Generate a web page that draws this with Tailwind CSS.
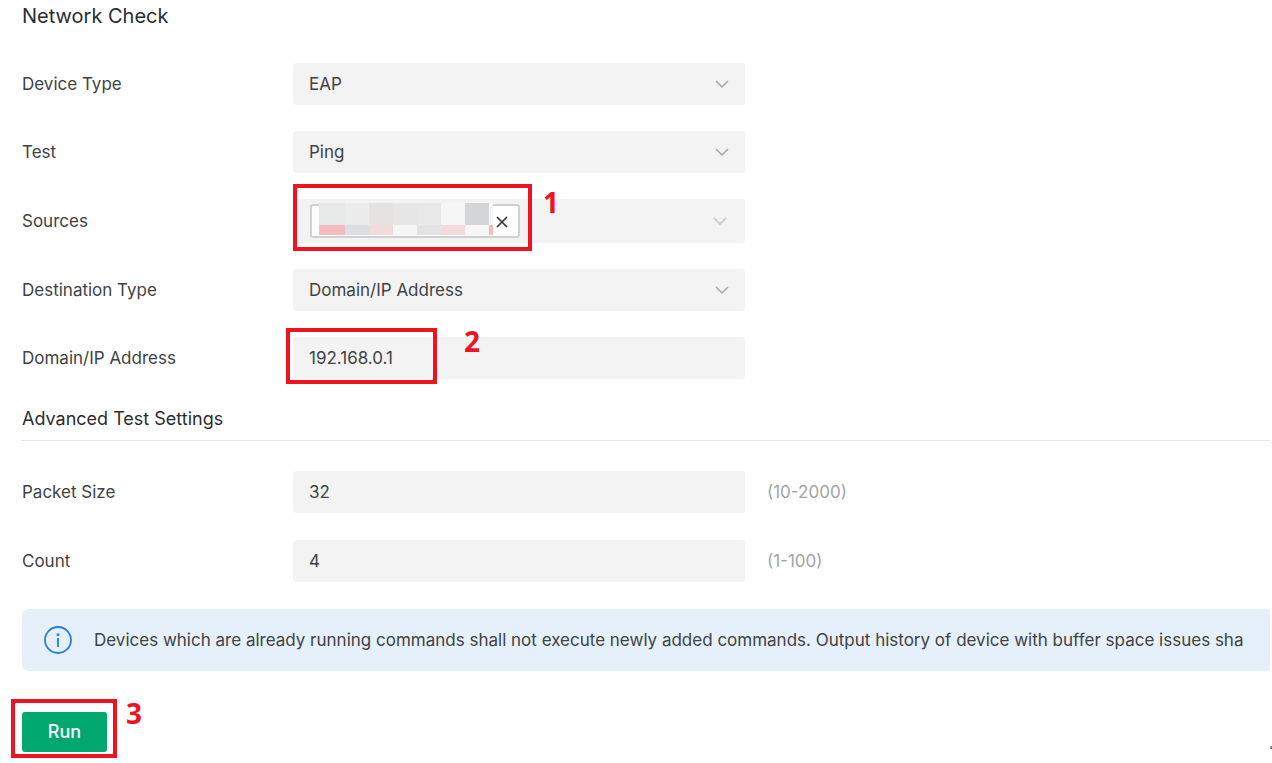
<!DOCTYPE html>
<html lang="en">

<head>
    <meta charset="UTF-8" />
    <meta name="viewport" content="width=device-width, initial-scale=1.0" />
    <title>Network Check</title>
    <script src="https://cdn.jsdelivr.net/npm/@tailwindcss/browser@4"></script>
</head>

<body class="bg-white font-['Inter',sans-serif] text-[17px] leading-6 text-[#404245] overflow-x-hidden">

    <main class="relative pl-[22px] pr-[2px] pt-1 pb-2">
        <h1 class="text-[20px] leading-6 text-[#2b2d30]">Network Check</h1>

        <form onsubmit="return false">
            <div class="flex flex-col gap-[26px] mt-[35px]">
                <div class="flex items-center">
                    <label for="device" class="w-[271px] shrink-0">Device Type</label>
                    <div class="relative w-[452px]">
                        <select id="device" class="appearance-none block w-full h-[42px] px-4 rounded bg-[#f3f3f3]">
                            <option>EAP</option>
                        </select>
                        <svg class="absolute right-4 top-4 w-[14px] h-[10px] pointer-events-none" viewBox="0 0 14 10" fill="none" stroke="#a5a6a8" stroke-width="1.5"><path d="M1 2l6 6 6-6" /></svg>
                    </div>
                </div>

                <div class="flex items-center">
                    <label for="test" class="w-[271px] shrink-0">Test</label>
                    <div class="relative w-[452px]">
                        <select id="test" class="appearance-none block w-full h-[42px] px-4 rounded bg-[#f3f3f3]">
                            <option>Ping</option>
                        </select>
                        <svg class="absolute right-4 top-4 w-[14px] h-[10px] pointer-events-none" viewBox="0 0 14 10" fill="none" stroke="#a5a6a8" stroke-width="1.5"><path d="M1 2l6 6 6-6" /></svg>
                    </div>
                </div>

                <div class="flex items-center">
                    <label for="sources" class="w-[271px] shrink-0">Sources</label>
                    <div class="relative w-[452px]">
                        <select id="sources" class="appearance-none block w-full h-11 px-4 rounded bg-[#f3f3f3]">
                            <option></option>
                        </select>
                        <svg class="absolute right-[18px] top-[17px] w-[14px] h-[10px] pointer-events-none" viewBox="0 0 14 10" fill="none" stroke="#cccdcf" stroke-width="1.8"><path d="M1 2l6 6 6-6" /></svg>

                        <!-- selected source, name hidden -->
                        <div class="absolute left-[17px] top-[5px] w-[210px] h-[34px] border-2 border-[#d0d0d0] rounded-[3px] bg-white">
                            <svg class="absolute left-[7px] -top-[3px] w-[174px] h-8" viewBox="0 0 174 32" shape-rendering="crispEdges">
                                <path fill="#e7e9e8" d="M0 0h26v22H0z" />
                                <path fill="#ececec" d="M26 0h24v22H26z" />
                                <path fill="#e4e3e1" d="M50 0h24v22H50z" />
                                <path fill="#e6e6e6" d="M74 0h24v22H74z" />
                                <path fill="#e8e8e8" d="M98 0h24v22H98z" />
                                <path fill="#f6f6f6" d="M122 0h24v22h-24zM170 0h4v22h-4z" />
                                <path fill="#d4d5d7" d="M146 0h24v22h-24z" />
                                <path fill="#f5bcc0" d="M0 22h26v10H0zM170 22h4v10h-4z" />
                                <path fill="#dcdee0" d="M26 22h24v10H26z" />
                                <path fill="#f3dadb" d="M50 22h24v10H50zM122 22h24v10h-24z" />
                                <path fill="#f6f6f6" d="M74 22h24v10H74zM146 22h24v10h-24z" />
                                <path fill="#e1e3e5" d="M98 22h24v10H98z" />
                            </svg>
                            <button type="button" aria-label="Remove source" class="absolute right-[10px] top-[10px] w-3 h-3">
                                <svg class="w-3 h-3" viewBox="0 0 12 12" fill="none" stroke="#333" stroke-width="1.6"><path d="M1 1l10 10M11 1L1 11" /></svg>
                            </button>
                        </div>

                        <div class="absolute left-0 -top-[15px] w-[239px] h-[67px] border-4 border-[#ee131e] pointer-events-none"></div>
                        <span class="absolute left-[250px] -top-[13px] font-['Open_Sans',sans-serif] font-bold text-[28px] leading-8 text-[#ee131e]">1</span>
                    </div>
                </div>

                <div class="flex items-center">
                    <label for="desttype" class="w-[271px] shrink-0">Destination Type</label>
                    <div class="relative w-[452px]">
                        <select id="desttype" class="appearance-none block w-full h-[42px] px-4 rounded bg-[#f3f3f3]">
                            <option>Domain/IP Address</option>
                        </select>
                        <svg class="absolute right-4 top-4 w-[14px] h-[10px] pointer-events-none" viewBox="0 0 14 10" fill="none" stroke="#a5a6a8" stroke-width="1.5"><path d="M1 2l6 6 6-6" /></svg>
                    </div>
                </div>

                <div class="flex items-center">
                    <label for="address" class="w-[271px] shrink-0">Domain/IP Address</label>
                    <div class="relative w-[452px]">
                        <input id="address" type="text" value="192.168.0.1" class="block w-full h-[42px] px-4 rounded bg-[#f3f3f3]" />
                        <div class="absolute -left-[7px] -top-[9px] w-[151px] h-14 border-4 border-[#ee131e] pointer-events-none"></div>
                        <span class="absolute left-[171px] -top-[12px] font-['Open_Sans',sans-serif] font-bold text-[28px] leading-8 text-[#ee131e]">2</span>
                    </div>
                </div>
            </div>

            <h2 class="mt-7 pb-[9px] border-b border-[#e5e5e6] text-[18px] leading-6 text-[#2b2d30]">Advanced Test Settings</h2>

            <div class="flex flex-col gap-[27px] mt-[30px]">
                <div class="flex items-center">
                    <label for="packet" class="w-[271px] shrink-0">Packet Size</label>
                    <input id="packet" type="text" value="32" class="w-[452px] h-[42px] px-4 rounded bg-[#f3f3f3]" />
                    <span class="ml-[22px] text-[#a3a4a6]">(10-2000)</span>
                </div>

                <div class="flex items-center">
                    <label for="count" class="w-[271px] shrink-0">Count</label>
                    <input id="count" type="text" value="4" class="w-[452px] h-[42px] px-4 rounded bg-[#f3f3f3]" />
                    <span class="ml-[22px] text-[#a3a4a6]">(1-100)</span>
                </div>
            </div>

            <div class="flex items-center h-[62px] mt-[27px] pl-[22px] rounded-l-md bg-[#e5f0fa] overflow-hidden whitespace-nowrap">
                <svg class="w-7 h-7 shrink-0" viewBox="0 0 28 28" fill="none" stroke="#2580d8" stroke-width="1.8">
                    <circle cx="14" cy="14" r="13" />
                    <path d="M14 12v9" />
                    <path stroke-width="2.6" d="M14 7.500v2.600" />
                </svg>
                <p class="ml-[22px]">Devices which are already running commands shall not execute newly added commands. Output history of device with buffer space issues sha</p>
            </div>

            <div class="relative mt-[41px] w-[85px]">
                <button type="submit" class="block w-full h-10 rounded-[3px] bg-[#00a870] text-white text-[18px] font-medium">Run</button>
                <div class="absolute -left-[11px] -top-[13px] w-[106px] h-[59px] border-4 border-[#ee131e] pointer-events-none"></div>
                <span class="absolute left-[104px] -top-[15px] font-['Open_Sans',sans-serif] font-bold text-[28px] leading-8 text-[#ee131e]">3</span>
            </div>
        </form>

        <div class="absolute right-0 bottom-[11px] w-[2px] h-[3px] rounded-l-full bg-[#77787a]"></div>
    </main>

</body>

</html>
